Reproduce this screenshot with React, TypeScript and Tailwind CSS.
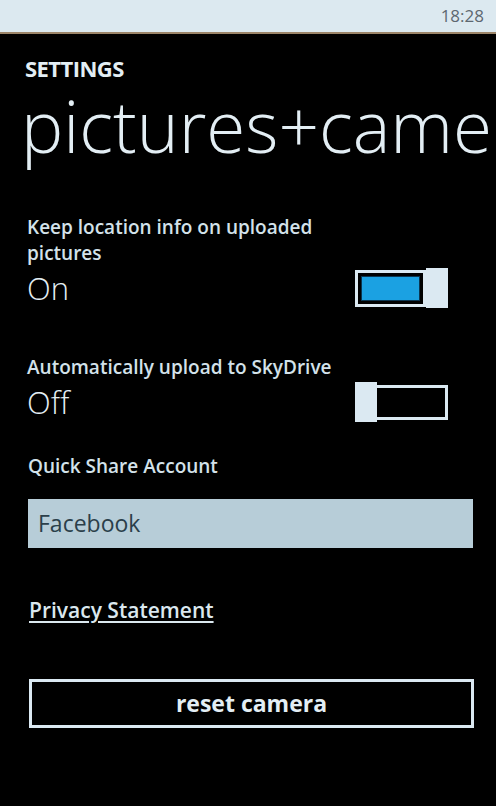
import React from 'react';

function Toggle({ on }: { on: boolean }) {
    if (on) {
        return (
            <div className="flex items-center">
                <div className="w-[71px] h-[37px] border-[3px] border-[#dbe9f2] p-[3px]">
                    <div className="w-full h-full bg-[#1ba1e2] border border-[#0a3550]" />
                </div>
                <div className="w-[22px] h-[40px] bg-[#dbe9f2]" />
            </div>
        );
    }
    return (
        <div className="flex items-center">
            <div className="w-[22px] h-[40px] bg-[#dbe9f2]" />
            <div className="w-[71px] h-[35px] border-[3px] border-l-0 border-[#dbe9f2]" />
        </div>
    );
}

function ToggleRow({ label, value, on }: { label: React.ReactNode; value: string; on: boolean }) {
    return (
        <div className="flex flex-col">
            <div className="text-[19px] leading-[26px] font-semibold text-[#d3e2ea]">{label}</div>
            <div className="flex items-center justify-between pr-[48px]">
                <span className="text-[31px] leading-[44px] font-light text-[#e3eef4]">{value}</span>
                <Toggle on={on} />
            </div>
        </div>
    );
}

export default function App() {
    return (
        <div
            className="w-[496px] h-[806px] bg-black text-[#e3eef4] overflow-hidden"
            style={{ fontFamily: '"Open Sans", "Noto Sans", sans-serif' }}
        >
            <div className="h-[34px] bg-[#dce9f0] border-b-[2px] border-[#9c8569] flex items-center justify-end pr-[12px]">
                <span className="text-[17px] text-[#5e6870]">18:28</span>
            </div>

            <div className="pl-[25px] pt-[19px]">
                <div className="text-[22px] leading-[30px] font-bold tracking-tight text-[#e3eef4]">SETTINGS</div>
                <div className="mt-[3px] text-[71px] leading-[80px] font-light whitespace-nowrap -ml-[4px] text-[#e3eef4]">
                    pictures+came
                </div>
            </div>

            <div className="pl-[27px] pt-[48px] flex flex-col gap-[44px]">
                <ToggleRow
                    label={<>Keep location info on uploaded<br />pictures</>}
                    value="On"
                    on
                />
                <ToggleRow label="Automatically upload to SkyDrive" value="Off" on={false} />
            </div>

            <div className="pl-[28px] pr-[23px] pt-[29px]">
                <div className="text-[19px] leading-[26px] font-semibold text-[#d3e2ea]">Quick Share Account</div>
                <div className="mt-[20px] h-[49px] bg-[#b7cdd8] flex items-center pl-[10px]">
                    <span className="text-[23px] text-[#2b3f4a]">Facebook</span>
                </div>
            </div>

            <div className="pl-[29px] pt-[48px]">
                <a className="text-[21px] leading-[28px] font-semibold underline underline-offset-[3px] text-[#dbe8ef]">Privacy Statement</a>
            </div>

            <div className="pl-[29px] pr-[22px] pt-[55px]">
                <div className="h-[49px] border-[3px] border-[#dbe9f2] flex items-center justify-center">
                    <span className="text-[23px] font-bold text-[#e3eef4]">reset camera</span>
                </div>
            </div>
        </div>
    );
}
